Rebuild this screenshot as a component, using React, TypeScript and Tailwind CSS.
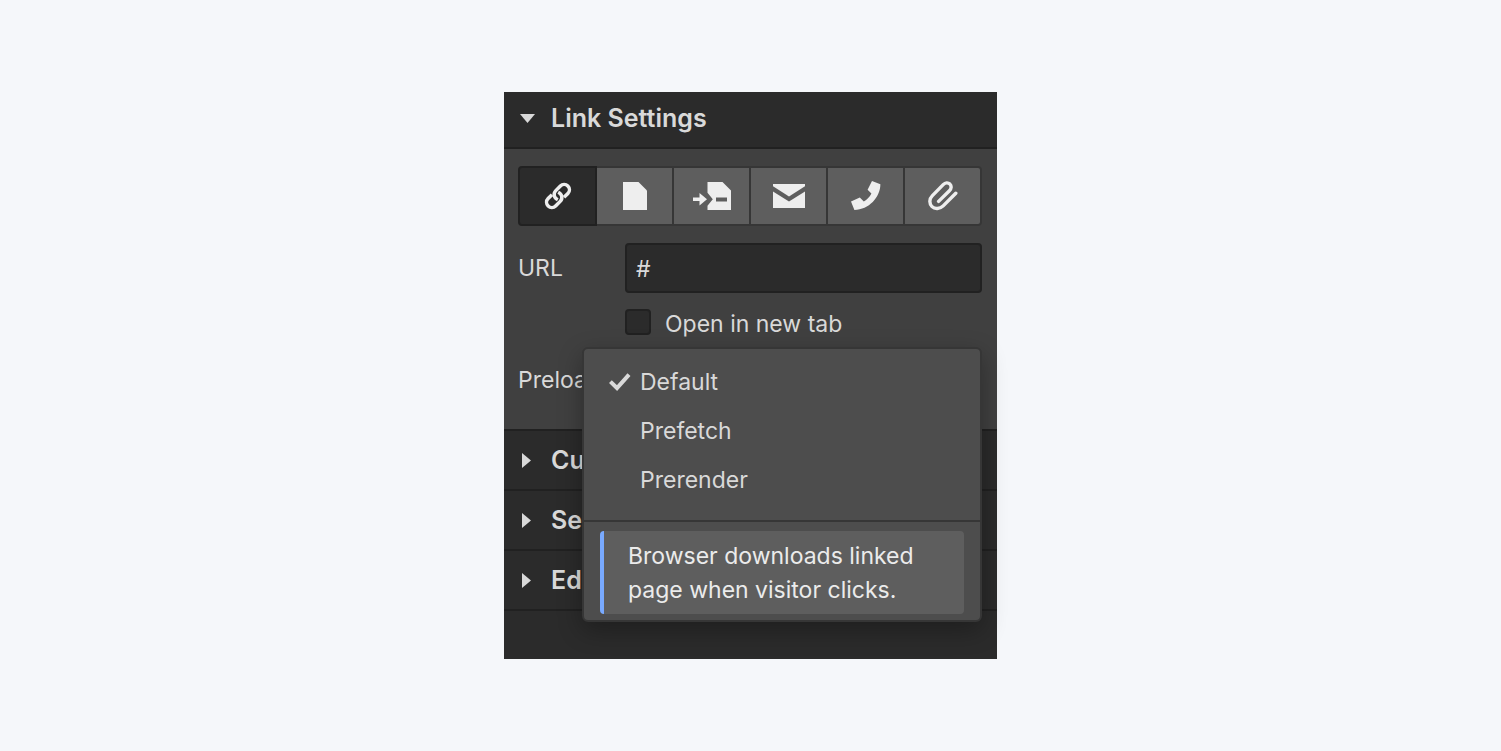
import { useState } from "react";

const linkTypes = [
  { id: "url", label: "URL", icon: <ChainIcon /> },
  { id: "page", label: "Page", icon: <PageIcon /> },
  { id: "section", label: "Page section", icon: <SectionIcon /> },
  { id: "email", label: "Email", icon: <MailIcon /> },
  { id: "phone", label: "Phone", icon: <PhoneIcon /> },
  { id: "file", label: "File", icon: <ClipIcon /> },
];

const preloadOptions = [
  { name: "Default", hint: "Browser downloads linked page when visitor clicks." },
  { name: "Prefetch", hint: "Browser downloads linked page in the background." },
  { name: "Prerender", hint: "Browser loads linked page in the background." },
];

const sections = ["Custom", "Search", "Editor"];

function ChainIcon() {
  return (
    <svg
      width="28"
      height="28"
      viewBox="0 0 28 28"
      fill="none"
      stroke="currentColor"
      strokeWidth="3.5"
    >
      <path d="M13.8 17.8C9.7 15.8 9.1 11.4 11.8 8.6L16.4 4A5.1 5.1 0 0 1 23.9 11.4L20 15.2" />
      <path d="M14.2 10.2C18.3 12.2 18.9 16.6 16.2 19.4L11.6 24A5.1 5.1 0 0 1 4.1 16.6L8 12.8" />
    </svg>
  );
}

function PageIcon() {
  return (
    <svg width="24" height="28" viewBox="0 0 24 28" fill="currentColor">
      <path d="M0 0H15.5L24 8.5V28H0Z" />
    </svg>
  );
}

function SectionIcon() {
  return (
    <svg width="38" height="28" viewBox="0 0 38 28" fill="currentColor">
      <path d="M0 15.6H6.5V11L14 17.3L6.5 23.6V19H0Z" />
      <path
        fillRule="evenodd"
        d="M14.5 0H29.5L38 8.5V28H14.5V23.8L19.8 17.3L14.5 10.8ZM23 15.4V19.4H34V15.4Z"
      />
    </svg>
  );
}

function MailIcon() {
  return (
    <svg width="32" height="24" viewBox="0 0 32 24" fill="currentColor">
      <path d="M0 0H32V2.2L16 12.4L0 2.2Z" />
      <path d="M0 7.6L16 17.4L32 7.6V24H0Z" />
    </svg>
  );
}

function PhoneIcon() {
  return (
    <svg width="30" height="30" viewBox="0 0 30 30" fill="currentColor">
      <path d="M21 0L29.4 3.2C29.2 16.5 18 28.4 3.4 29L0 20.6L8.8 16.4L12.8 20.6C16 18.8 18.8 16 20.4 12.6L16.6 8.8Z" />
    </svg>
  );
}

function ClipIcon() {
  return (
    <svg
      width="30"
      height="30"
      viewBox="0 0 30 30"
      fill="none"
      stroke="currentColor"
      strokeWidth="3.4"
      strokeLinecap="round"
    >
      <path d="M27.8 12.2L15.2 24.9C11.8 28.2 6.8 28.4 4 25.6C1 22.6 1.2 17.8 4.4 14.6L15.2 3.6C17.3 1.5 20 1.3 21.9 3.1C23.7 4.9 23.5 7.6 21.4 9.7L10.6 20.4" />
    </svg>
  );
}

function CheckIcon() {
  return (
    <svg
      width="22"
      height="20"
      viewBox="0 0 22 20"
      fill="none"
      stroke="currentColor"
      strokeWidth="4"
    >
      <path d="M1.4 8.6L8 15L20 1.6" />
    </svg>
  );
}

export default function App() {
  const [linkType, setLinkType] = useState("url");
  const [url, setUrl] = useState("#");
  const [newTab, setNewTab] = useState(false);
  const [preload, setPreload] = useState("Default");

  const selected = preloadOptions.find((option) => option.name === preload);

  return (
    <main className="flex min-h-screen items-center justify-center bg-[#f5f7fa] font-['Inter',sans-serif] text-[23px] text-[#d9d9d9]">
      <div className="w-full max-w-[493px] bg-[#2b2b2b]">
        <h2 className="border-b-2 border-[#212121] text-[25px] leading-8 font-semibold">
          <button type="button" className="flex w-full items-center gap-4 px-4 pt-2.5 pb-[13px]">
            <svg width="15" height="9" viewBox="0 0 15 9" fill="currentColor">
              <path d="M0 0H15L7.5 9Z" />
            </svg>
            Link Settings
          </button>
        </h2>

        <div className="bg-[#404040] pt-[17px] pr-[15px] pb-6 pl-3.5">
          <div className="flex h-[60px]">
            {linkTypes.map((type) => (
              <button
                key={type.id}
                type="button"
                aria-label={type.label}
                aria-pressed={linkType === type.id}
                onClick={() => setLinkType(type.id)}
                className={`flex flex-1 items-center justify-center border-y-2 border-r-2 text-[#eeeeee] first:rounded-l first:border-l-2 last:rounded-r ${
                  linkType === type.id
                    ? "border-[#212121] bg-[#2b2b2b]"
                    : "border-[#363636] bg-[#5e5e5e]"
                }`}
              >
                {type.icon}
              </button>
            ))}
          </div>

          <div className="mt-[17px] flex items-center">
            <label htmlFor="url" className="w-[107px]">
              URL
            </label>
            <input
              id="url"
              type="text"
              value={url}
              onChange={(event) => setUrl(event.target.value)}
              className="h-[50px] min-w-0 flex-1 rounded border-2 border-[#212121] bg-[#2b2b2b] px-[9px] pt-0.5 outline-none"
            />
          </div>

          <div className="mt-4 ml-[107px] flex h-[26px] items-center gap-3.5">
            <input
              id="new-tab"
              type="checkbox"
              checked={newTab}
              onChange={(event) => setNewTab(event.target.checked)}
              className="size-[26px] appearance-none rounded border-2 border-[#212121] bg-[#2b2b2b] checked:bg-[#79aaff]"
            />
            <label htmlFor="new-tab" className="pt-1">
              Open in new tab
            </label>
          </div>

          <div className="relative mt-5 flex h-[50px] items-center">
            <span id="preload-label">Preload</span>
            <div className="absolute -top-2 right-0 left-16 z-10 rounded-md border-2 border-[#363636] bg-[#4d4d4d] pb-1.5 shadow-[0_8px_24px_rgba(0,0,0,0.3)]">
              <div role="menu" aria-labelledby="preload-label" className="border-b-2 border-[#363636] pt-[9px] pb-[15px]">
                {preloadOptions.map((option) => (
                  <button
                    key={option.name}
                    type="button"
                    role="menuitemradio"
                    aria-checked={preload === option.name}
                    onClick={() => setPreload(option.name)}
                    className="flex h-[49px] w-full items-center pl-[25px]"
                  >
                    <span className="w-[31px]">{preload === option.name && <CheckIcon />}</span>
                    {option.name}
                  </button>
                ))}
              </div>
              <p className="mx-4 mt-[9px] rounded border-l-4 border-[#79aaff] bg-[#5e5e5e] pt-2 pr-10 pb-[7px] pl-6 leading-[34px] text-[#ebebeb]">
                {selected?.hint}
              </p>
            </div>
          </div>
        </div>

        {sections.map((title) => (
          <h2 key={title} className="border-t-2 border-[#212121] text-[25px] leading-8 font-semibold">
            <button type="button" className="flex h-[58px] w-full items-center gap-5 px-[18px]">
              <svg width="9" height="15" viewBox="0 0 9 15" fill="currentColor">
                <path d="M0 0L9 7.5L0 15Z" />
              </svg>
              {title}
            </button>
          </h2>
        ))}
        <div className="h-[50px] border-t-2 border-[#212121]" />
      </div>
    </main>
  );
}
